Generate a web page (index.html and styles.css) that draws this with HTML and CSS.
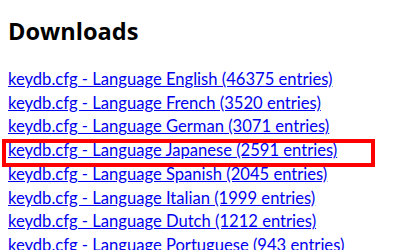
FILE: index.html
```html
<!DOCTYPE html>
<html>
<head>
    <title>Downloads</title>
    <meta charset="UTF-8">
    <link rel="stylesheet" href="styles.css">
</head>
<body>

    <h1>Downloads</h1>

    <div class="downloads">
        <a href="#">keydb.cfg - Language English (46375 entries)</a>
        <a href="#">keydb.cfg - Language French (3520 entries)</a>
        <a href="#">keydb.cfg - Language German (3071 entries)</a>
        <div class="highlight">
            <a href="#">keydb.cfg - Language Japanese (2591 entries)</a>
            <span class="marker"></span>
        </div>
        <a href="#">keydb.cfg - Language Spanish (2045 entries)</a>
        <a href="#">keydb.cfg - Language Italian (1999 entries)</a>
        <a href="#">keydb.cfg - Language Dutch (1212 entries)</a>
        <a href="#">keydb.cfg - Language Portuguese (943 entries)</a>
    </div>

</body>
</html>
```

FILE: styles.css
```css
body {
    font-family: Lato, "Open Sans", sans-serif;
    background: white;
    color: #000;
    margin: 0;
    padding: 0 8px;
}
h1 {
    font-family: "Open Sans", sans-serif;
    font-size: 23.6px;
    font-weight: bold;
    margin: 0;
    padding-top: 19px;
    line-height: 24px;
}
.downloads {
    margin-top: 25px;
}
.downloads a {
    display: block;
    width: max-content;
    color: #0000ee;
    font-size: 16.6px;
    line-height: 23.7px;
}
.highlight {
    position: relative;
}
.marker {
    position: absolute;
    left: -6px;
    top: 0;
    width: 365px;
    height: 20px;
    border: 4px solid #ff0000;
}
```
